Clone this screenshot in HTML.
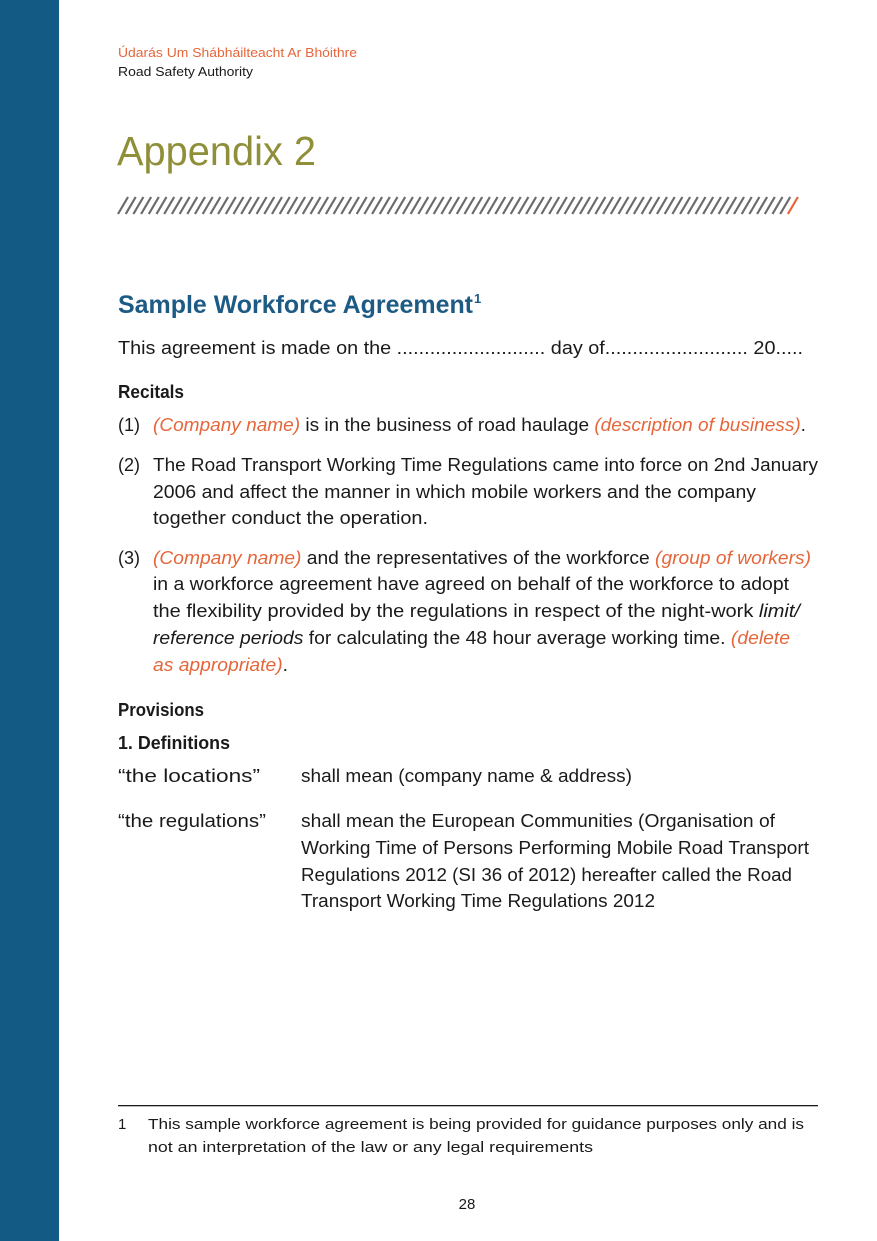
<!DOCTYPE html>
<html><head><meta charset="utf-8"><style>
html,body{margin:0;padding:0;background:#fff}
svg{display:block}
text{font-family:"Liberation Sans",sans-serif}
.b{font-size:18px;fill:#1a1a1a}
.o{fill:#e5663a;font-style:italic}
.bd{font-weight:bold;font-size:18px;fill:#1a1a1a}
</style></head><body>
<svg width="877" height="1241" viewBox="0 0 877 1241" xmlns="http://www.w3.org/2000/svg">
<rect x="0" y="0" width="59" height="1241" fill="#135a85"/>
<text x="118" y="57" font-size="13" fill="#e5663a" textLength="239" lengthAdjust="spacingAndGlyphs">Údarás Um Shábháilteacht Ar Bhóithre</text>
<text x="118" y="76" font-size="13" fill="#1a1a1a" textLength="135" lengthAdjust="spacingAndGlyphs">Road Safety Authority</text>
<text x="117" y="165" font-size="41" fill="#8f8f3a" textLength="199" lengthAdjust="spacingAndGlyphs">Appendix 2</text>
<g id="hatch" stroke="#6b6b6b" stroke-width="2.2"></g>
<text x="118" y="313" font-size="25" font-weight="bold" fill="#1d5b85" textLength="355" lengthAdjust="spacingAndGlyphs">Sample Workforce Agreement</text>
<text x="474" y="303" font-size="13" font-weight="bold" fill="#1d5b85">1</text>
<text class="b" x="118" y="354" textLength="685" lengthAdjust="spacingAndGlyphs">This agreement is made on the ........................... day of.......................... 20.....</text>
<text class="bd" x="118" y="398" textLength="66" lengthAdjust="spacingAndGlyphs">Recitals</text>
<text class="b" x="118" y="431">(1)</text>
<text class="b" x="153" y="431" textLength="653" lengthAdjust="spacingAndGlyphs"><tspan class="o">(Company name)</tspan> is in the business of road haulage <tspan class="o">(description of business)</tspan>.</text>
<text class="b" x="118" y="471">(2)</text>
<text class="b" x="153" y="471" textLength="665" lengthAdjust="spacingAndGlyphs">The Road Transport Working Time Regulations came into force on 2nd January</text>
<text class="b" x="153" y="498" textLength="603" lengthAdjust="spacingAndGlyphs">2006 and affect the manner in which mobile workers and the company</text>
<text class="b" x="153" y="524" textLength="275" lengthAdjust="spacingAndGlyphs">together conduct the operation.</text>
<text class="b" x="118" y="564">(3)</text>
<text class="b" x="153" y="564" textLength="658" lengthAdjust="spacingAndGlyphs"><tspan class="o">(Company name)</tspan> and the representatives of the workforce <tspan class="o">(group of workers)</tspan></text>
<text class="b" x="153" y="590" textLength="636" lengthAdjust="spacingAndGlyphs">in a workforce agreement have agreed on behalf of the workforce to adopt</text>
<text class="b" x="153" y="617" textLength="647" lengthAdjust="spacingAndGlyphs">the flexibility provided by the regulations in respect of the night-work <tspan font-style="italic">limit/</tspan></text>
<text class="b" x="153" y="644" textLength="637" lengthAdjust="spacingAndGlyphs"><tspan font-style="italic">reference periods</tspan> for calculating the 48 hour average working time. <tspan class="o">(delete</tspan></text>
<text class="b" x="153" y="671" textLength="135" lengthAdjust="spacingAndGlyphs"><tspan class="o">as appropriate)</tspan>.</text>
<text class="bd" x="118" y="716" textLength="86" lengthAdjust="spacingAndGlyphs">Provisions</text>
<text class="bd" x="118" y="749" textLength="112" lengthAdjust="spacingAndGlyphs">1. Definitions</text>
<text class="b" x="118" y="782" textLength="142" lengthAdjust="spacingAndGlyphs">“the locations”</text>
<text class="b" x="301" y="782" textLength="331" lengthAdjust="spacingAndGlyphs">shall mean (company name &amp; address)</text>
<text class="b" x="118" y="827" textLength="148" lengthAdjust="spacingAndGlyphs">“the regulations”</text>
<text class="b" x="301" y="827" textLength="474" lengthAdjust="spacingAndGlyphs">shall mean the European Communities (Organisation of</text>
<text class="b" x="301" y="854" textLength="508" lengthAdjust="spacingAndGlyphs">Working Time of Persons Performing Mobile Road Transport</text>
<text class="b" x="301" y="881" textLength="491" lengthAdjust="spacingAndGlyphs">Regulations 2012 (SI 36 of 2012) hereafter called the Road</text>
<text class="b" x="301" y="907" textLength="354" lengthAdjust="spacingAndGlyphs">Transport Working Time Regulations 2012</text>
<rect x="118" y="1105" width="700" height="1.3" fill="#1a1a1a"/>
<text x="118" y="1129" font-size="15" fill="#1a1a1a">1</text>
<text x="148" y="1129" font-size="15" fill="#1a1a1a" textLength="656" lengthAdjust="spacingAndGlyphs">This sample workforce agreement is being provided for guidance purposes only and is</text>
<text x="148" y="1152" font-size="15" fill="#1a1a1a" textLength="445" lengthAdjust="spacingAndGlyphs">not an interpretation of the law or any legal requirements</text>
<text x="467" y="1209" font-size="15" fill="#1a1a1a" text-anchor="middle">28</text>
<g stroke="#6b6b6b" stroke-width="2.2">
<path d="M118 214 L128 197 M125.7 214 L135.7 197 M133.4 214 L143.4 197 M141.1 214 L151.1 197 M148.8 214 L158.8 197 M156.5 214 L166.5 197 M164.2 214 L174.2 197 M171.9 214 L181.9 197 M179.6 214 L189.6 197 M187.3 214 L197.3 197 M195 214 L205 197 M202.7 214 L212.7 197 M210.4 214 L220.4 197 M218.1 214 L228.1 197 M225.8 214 L235.8 197 M233.5 214 L243.5 197 M241.2 214 L251.2 197 M248.9 214 L258.9 197 M256.6 214 L266.6 197 M264.3 214 L274.3 197 M272 214 L282 197 M279.7 214 L289.7 197 M287.4 214 L297.4 197 M295.1 214 L305.1 197 M302.8 214 L312.8 197 M310.5 214 L320.5 197 M318.2 214 L328.2 197 M325.9 214 L335.9 197 M333.6 214 L343.6 197 M341.3 214 L351.3 197 M349 214 L359 197 M356.7 214 L366.7 197 M364.4 214 L374.4 197 M372.1 214 L382.1 197 M379.8 214 L389.8 197 M387.5 214 L397.5 197 M395.2 214 L405.2 197 M402.9 214 L412.9 197 M410.6 214 L420.6 197 M418.3 214 L428.3 197 M426 214 L436 197 M433.7 214 L443.7 197 M441.4 214 L451.4 197 M449.1 214 L459.1 197 M456.8 214 L466.8 197 M464.5 214 L474.5 197 M472.2 214 L482.2 197 M479.9 214 L489.9 197 M487.6 214 L497.6 197 M495.3 214 L505.3 197 M503 214 L513 197 M510.7 214 L520.7 197 M518.4 214 L528.4 197 M526.1 214 L536.1 197 M533.8 214 L543.8 197 M541.5 214 L551.5 197 M549.2 214 L559.2 197 M556.9 214 L566.9 197 M564.6 214 L574.6 197 M572.3 214 L582.3 197 M580 214 L590 197 M587.7 214 L597.7 197 M595.4 214 L605.4 197 M603.1 214 L613.1 197 M610.8 214 L620.8 197 M618.5 214 L628.5 197 M626.2 214 L636.2 197 M633.9 214 L643.9 197 M641.6 214 L651.6 197 M649.3 214 L659.3 197 M657 214 L667 197 M664.7 214 L674.7 197 M672.4 214 L682.4 197 M680.1 214 L690.1 197 M687.8 214 L697.8 197 M695.5 214 L705.5 197 M703.2 214 L713.2 197 M710.9 214 L720.9 197 M718.6 214 L728.6 197 M726.3 214 L736.3 197 M734 214 L744 197 M741.7 214 L751.7 197 M749.4 214 L759.4 197 M757.1 214 L767.1 197 M764.8 214 L774.8 197 M772.5 214 L782.5 197 M780.2 214 L790.2 197"/>
</g>
<path d="M787.9 214 L797.9 197" stroke="#e5663a" stroke-width="2.2"/>
</svg>
</body></html>
